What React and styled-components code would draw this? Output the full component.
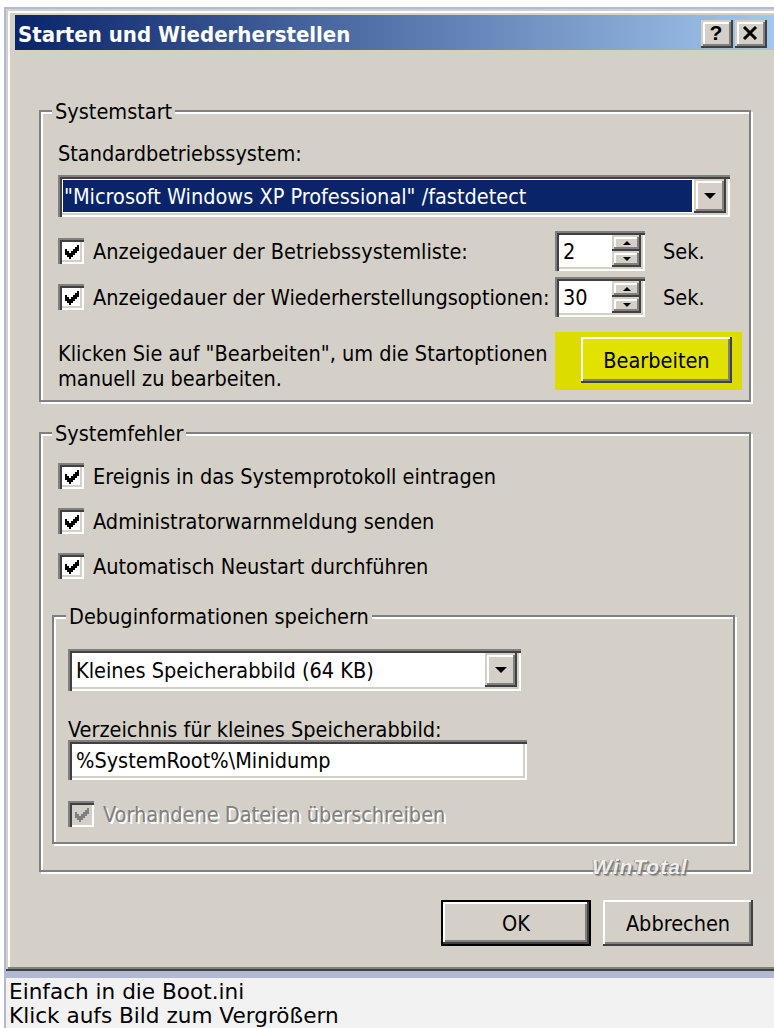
import React from 'react';
import styled, { createGlobalStyle, css } from 'styled-components';

const GlobalStyle = createGlobalStyle`
  html, body {
    margin: 0;
    padding: 0;
    background: #fff;
    overflow: hidden;
  }
`;

// classic 3d edges, two pixels per step
const raised = css`
  box-shadow:
    inset -2px -2px 0 #404040,
    inset 2px 2px 0 #d4d0c8,
    inset -4px -4px 0 #808080,
    inset 4px 4px 0 #fff;
`;

const sunken = css`
  box-shadow:
    inset 2px 2px 0 #808080,
    inset 4px 4px 0 #404040,
    inset -2px -2px 0 #fff,
    inset -4px -4px 0 #d4d0c8;
`;

// the screenshot cell is wider than the page, so it gets cut on the right
const Frame = styled.div`
  margin: 7px 0 0 4px;
  padding: 2px 0 0 2px;
  background: #b2bad2;
  display: flex;
  flex-direction: column;
  gap: 7px;
  overflow: hidden;
`;

const Window = styled.div`
  width: 790px;
  flex: none;
  box-sizing: border-box;
  padding: 6px 8px 8px 9px;
  background: #d4d0c8;
  color: #000;
  font-family: "DejaVu Sans Condensed", "Liberation Sans", sans-serif;
  font-size: 21.5px;
  box-shadow:
    inset -2px -2px 0 #404040,
    inset 2px 2px 0 #d4d0c8,
    inset -4px -4px 0 #808080,
    inset 4px 4px 0 #fff;
`;

const TitleBar = styled.div`
  height: 35px;
  display: flex;
  align-items: center;
  padding: 0 21px 0 3px;
  background: linear-gradient(to right, #0a246a 0%, #a6caf0 100%);
`;

const TitleText = styled.div`
  flex: 1;
  padding-top: 3px;
  color: #fff;
  font-weight: bold;
  font-size: 22px;
  white-space: nowrap;
`;

const CaptionButtons = styled.div`
  display: flex;
  gap: 2px;
  margin-top: 2px;
`;

const CaptionButton = styled.div`
  width: 32px;
  height: 28px;
  box-sizing: border-box;
  background: #d4d0c8;
  display: flex;
  align-items: center;
  justify-content: center;
  font-family: "Liberation Sans", sans-serif;
  font-weight: bold;
  font-size: 21px;
  padding: 0 2px 2px 0;
  ${raised};
`;

const Client = styled.div`
  position: relative;
  display: flex;
  flex-direction: column;
  padding: 0 37px 17px 24px;
`;

const GroupBox = styled.div`
  display: flex;
  flex-direction: column;
  margin-top: ${p => p.$top}px;
  padding: ${p => p.$pad};
  border: 2px solid #808080;
  box-shadow: inset 2px 2px 0 #fff, 2px 2px 0 #fff;
`;

const Legend = styled.div`
  align-self: flex-start;
  margin: -13px 0 0 ${p => p.$shift || 0}px;
  padding: 0 3px;
  line-height: 26px;
  background: #d4d0c8;
  white-space: nowrap;
`;

const Label = styled.div`
  margin: ${p => p.$m};
  line-height: ${p => p.$lh || 26}px;
  white-space: nowrap;
`;

const Combo = styled.div`
  width: ${p => p.$w}px;
  height: 42px;
  box-sizing: border-box;
  margin: ${p => p.$m};
  padding: 4px;
  display: flex;
  gap: 2px;
  background: #fff;
  ${sunken};
`;

const ComboValue = styled.div`
  flex: 1;
  margin: 1px 0 1px 1px;
  padding-left: ${p => (p.$selected ? 1 : 3)}px;
  display: flex;
  align-items: center;
  white-space: nowrap;
  overflow: hidden;
  background: ${p => (p.$selected ? '#0a246a' : 'transparent')};
  color: ${p => (p.$selected ? '#fff' : '#000')};
`;

const DropButton = styled.div`
  width: 32px;
  box-sizing: border-box;
  background: #d4d0c8;
  display: flex;
  align-items: center;
  justify-content: center;
  padding: 0 1px 1px 0;
  ${raised};
`;

const OptionRow = styled.div`
  display: grid;
  grid-template-columns: 497px 90px auto;
  align-items: center;
  height: 40px;
  margin: ${p => p.$m};
`;

const CheckField = styled.div`
  display: flex;
  align-items: center;
  gap: 9px;
  height: 26px;
  margin: ${p => p.$m || 0};
  white-space: nowrap;
  color: ${p => (p.$disabled ? '#808080' : '#000')};
  text-shadow: ${p => (p.$disabled ? '2px 2px 0 #fff' : 'none')};
`;

const CheckBox = styled.div`
  width: 26px;
  height: 26px;
  flex: none;
  box-sizing: border-box;
  display: flex;
  align-items: center;
  justify-content: center;
  padding: 2px 0 0 2px;
  background: ${p => (p.$disabled ? '#d4d0c8' : '#fff')};
  ${sunken};
`;

const SpinEdit = styled.div`
  width: 90px;
  height: 40px;
  box-sizing: border-box;
  padding: 4px;
  display: flex;
  background: #fff;
  ${sunken};
`;

const SpinValue = styled.div`
  flex: 1;
  padding-left: 4px;
  display: flex;
  align-items: center;
`;

const SpinButtons = styled.div`
  width: 29px;
  display: flex;
  flex-direction: column;
`;

const SpinButton = styled.div`
  flex: 1;
  display: flex;
  align-items: center;
  justify-content: center;
  background: #d4d0c8;
  ${raised};
`;

const Unit = styled.div`
  margin-left: 18px;
`;

const EditRow = styled.div`
  display: grid;
  grid-template-columns: 497px 187px;
  margin: 15px 0 0 6px;
`;

const Hint = styled.div`
  margin-top: 9px;
  line-height: 25px;
  white-space: nowrap;
`;

const Highlight = styled.div`
  height: 58px;
  box-sizing: border-box;
  padding: 5px 10px 7px 26px;
  background: #dcdc00;
`;

const PushButton = styled.div`
  width: ${p => p.$w || 150}px;
  height: 46px;
  box-sizing: border-box;
  display: flex;
  align-items: center;
  justify-content: center;
  background: ${p => p.$face || '#d4d0c8'};
  border: ${p => (p.$default ? '2px solid #000' : 'none')};
  box-shadow:
    inset -2px -2px 0 #404040,
    inset 2px 2px 0 #fff,
    inset -4px -4px 0 #808080;
`;

const TextInput = styled.div`
  width: 459px;
  height: 40px;
  box-sizing: border-box;
  padding: 0 8px;
  display: flex;
  align-items: center;
  background: #fff;
  ${sunken};
`;

const ButtonRow = styled.div`
  display: flex;
  justify-content: flex-end;
  gap: 12px;
  margin: 28px -2px 0 0;
`;

const Watermark = styled.div`
  position: absolute;
  left: 577px;
  top: 805px;
  font-family: "Liberation Sans", sans-serif;
  font-weight: bold;
  font-style: italic;
  font-size: 21px;
  letter-spacing: 1px;
  color: #f4f4f4;
  text-shadow: 1px 1px 0 #6c6c6c, -1px 0 0 #9a9a9a, 2px 2px 1px #888;
  opacity: 0.85;
`;

const Caption = styled.div`
  min-height: 60px;
  padding: 2px 0 0 3px;
  background: #f2f2f2;
  font-family: "DejaVu Sans", Verdana, sans-serif;
  font-size: 21.6px;
  line-height: 24px;
  color: #000;
`;

const Check = ({ color = '#000' }) => (
  <svg width="14" height="14" viewBox="0 0 7 7" shapeRendering="crispEdges">
    <path
      fill={color}
      d="M6 0h1v1h-1z M5 1h2v1h-2z M0 2h1v1h-1z M4 2h3v1h-3z M0 3h2v1h-2z M3 3h3v1h-3z M0 4h5v1h-5z M1 5h3v1h-3z M2 6h1v1h-1z"
    />
  </svg>
);

const Arrow = ({ up, w = 12, h = 6 }) => (
  <svg width={w} height={h} viewBox="0 0 12 6">
    <path d={up ? 'M6 0L12 6H0z' : 'M0 0h12L6 6z'} fill="#000" />
  </svg>
);

const CheckOption = ({ children, disabled, m }) => (
  <CheckField $disabled={disabled} $m={m}>
    <CheckBox $disabled={disabled}>
      <Check color={disabled ? '#808080' : '#000'} />
    </CheckBox>
    <span>{children}</span>
  </CheckField>
);

const Spin = ({ value }) => (
  <SpinEdit>
    <SpinValue>{value}</SpinValue>
    <SpinButtons>
      <SpinButton><Arrow up w={8} h={4} /></SpinButton>
      <SpinButton><Arrow w={8} h={4} /></SpinButton>
    </SpinButtons>
  </SpinEdit>
);

const DropDown = ({ value, width, selected, m }) => (
  <Combo $w={width} $m={m}>
    <ComboValue $selected={selected}>{value}</ComboValue>
    <DropButton><Arrow /></DropButton>
  </Combo>
);

export default function App() {
  return (
    <>
      <GlobalStyle />
      <Frame>
        <Window>
          <TitleBar>
            <TitleText>Starten und Wiederherstellen</TitleText>
            <CaptionButtons>
              <CaptionButton>?</CaptionButton>
              <CaptionButton>
                <svg width="16" height="14" viewBox="0 0 16 14">
                  <path d="M2 1L14 13M14 1L2 13" stroke="#000" strokeWidth="3" />
                </svg>
              </CaptionButton>
            </CaptionButtons>
          </TitleBar>

          <Client>
            <GroupBox $top={60} $pad="0 0 9px 11px">
              <Legend>Systemstart</Legend>
              <Label $m="16px 0 0 6px">Standardbetriebssystem:</Label>
              <DropDown
                m="8px 0 0 6px"
                width={672}
                selected
                value={'"Microsoft Windows XP Professional" /fastdetect'}
              />
              <OptionRow $m="14px 0 0 6px">
                <CheckOption>Anzeigedauer der Betriebssystemliste:</CheckOption>
                <Spin value="2" />
                <Unit>Sek.</Unit>
              </OptionRow>
              <OptionRow $m="6px 0 0 6px">
                <CheckOption>Anzeigedauer der Wiederherstellungsoptionen:</CheckOption>
                <Spin value="30" />
                <Unit>Sek.</Unit>
              </OptionRow>
              <EditRow>
                <Hint>
                  Klicken Sie auf "Bearbeiten", um die Startoptionen
                  <br />
                  manuell zu bearbeiten.
                </Hint>
                <Highlight>
                  <PushButton $w={151} $face="#e2e200">Bearbeiten</PushButton>
                </Highlight>
              </EditRow>
            </GroupBox>

            <GroupBox $top={30} $pad="0 14px 26px 11px">
              <Legend>Systemfehler</Legend>
              <CheckOption m="16px 0 0 6px">Ereignis in das Systemprotokoll eintragen</CheckOption>
              <CheckOption m="19px 0 0 6px">Administratorwarnmeldung senden</CheckOption>
              <CheckOption m="19px 0 0 6px">Automatisch Neustart durchführen</CheckOption>

              <GroupBox $top={36} $pad="0 0 15px 14px">
                <Legend $shift={-2}>Debuginformationen speichern</Legend>
                <DropDown m="19px 0 0 0" width={453} value="Kleines Speicherabbild (64 KB)" />
                <Label $m="29px 0 0 0" $lh={20}>Verzeichnis für kleines Speicherabbild:</Label>
                <TextInput>%SystemRoot%\Minidump</TextInput>
                <CheckOption disabled m="21px 0 0 0">Vorhandene Dateien überschreiben</CheckOption>
              </GroupBox>
            </GroupBox>

            <ButtonRow>
              <PushButton $default>OK</PushButton>
              <PushButton>Abbrechen</PushButton>
            </ButtonRow>

            <Watermark>WinTotal</Watermark>
          </Client>
        </Window>

        <Caption>
          Einfach in die Boot.ini
          <br />
          Klick aufs Bild zum Vergrößern
        </Caption>
      </Frame>
    </>
  );
}
